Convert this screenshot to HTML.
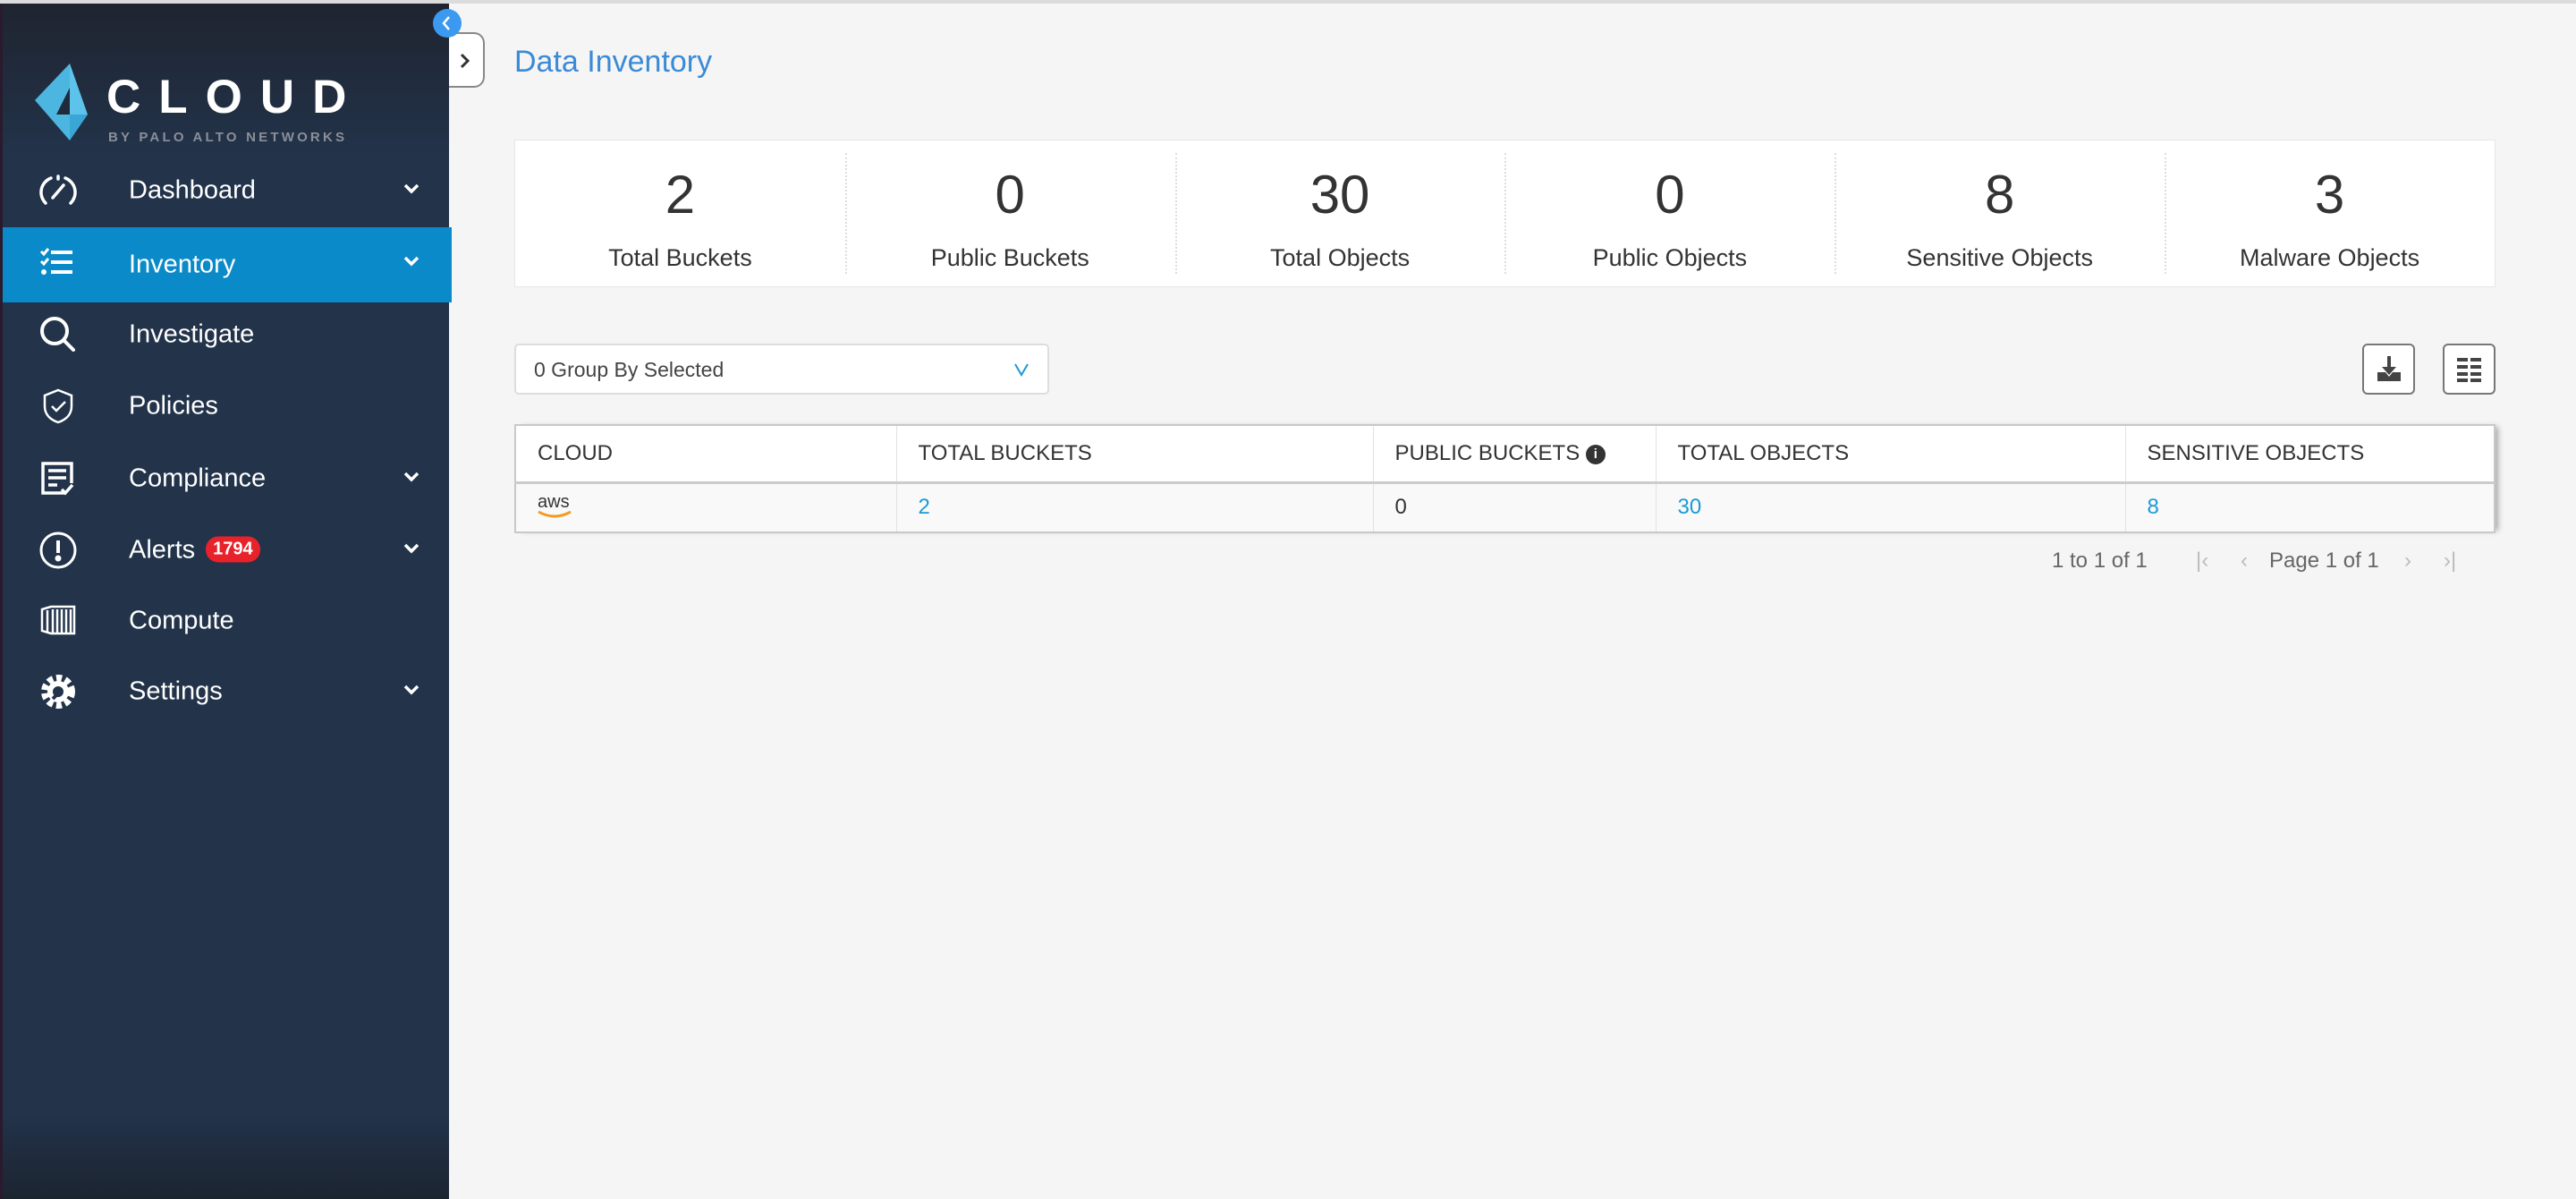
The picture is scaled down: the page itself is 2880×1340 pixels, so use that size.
<!DOCTYPE html>
<html><head><style>
*{margin:0;padding:0;box-sizing:border-box}
body{width:2880px;height:1340px;overflow:hidden;background:#f5f5f5;font-family:"Liberation Sans",sans-serif;position:relative;color:#333}
.top{position:absolute;left:0;top:0;width:2880px;height:4px;background:#dcdcdc}
.side{position:absolute;left:0;top:4px;width:502px;height:1336px;background:linear-gradient(#1f2430 0px,#22334a 170px,#22334a 1240px,#1c2430 1336px);border-left:3px solid #2a1a2e}
.item{position:absolute;left:0;width:502px;height:80px;color:#fff;font-size:29px}
.item .lbl{position:absolute;left:141px;top:50%;transform:translateY(-50%)}
.item svg.ic{position:absolute;left:40px;top:18px}
.item .chev{position:absolute;left:447px;top:28px}
.sel{background:#0a8ac8}
.badge{display:inline-block;background:#e8222b;color:#fff;font-size:20px;font-weight:bold;border-radius:14px;padding:3px 8px;margin-left:12px;vertical-align:4px}
.title{position:absolute;left:575px;top:50px;font-size:34px;color:#3a8ad6}
.stats{position:absolute;left:575px;top:156px;width:2215px;height:165px;background:#fff;border:1px solid #e6e6e6;display:flex}
.stat{flex:1;text-align:center;position:relative}
.stat+.stat:before{content:"";position:absolute;left:0;top:14px;bottom:14px;border-left:2px dotted #ddd}
.stat .n{font-size:60px;margin-top:26px;color:#333;height:72px}
.stat .l{font-size:27px;margin-top:18px;color:#333}
.dd{position:absolute;left:575px;top:384px;width:598px;height:57px;background:#fff;border:2px solid #ddd;border-radius:5px;font-size:23px;color:#444;padding:14px 20px}
.btn{position:absolute;top:384px;width:59px;height:57px;background:#fff;border:2px solid #777;border-radius:6px}
table{position:absolute;left:575px;top:474px;width:2215px;border-collapse:collapse;border:2px solid #c8c8c8;box-shadow:6px 0 6px -3px #aaa}
th{height:64px;background:#fff;text-align:left;font-size:24px;font-weight:normal;color:#333;padding-left:24px;border-right:1px solid #e2e2e2;border-bottom:3px solid #ccc}
td{height:56px;background:#f9f9f9;font-size:24px;padding-left:24px;border-right:1px solid #e2e2e2;color:#333}
td.b{color:#1a9ad6}
.pg{position:absolute;top:613px;font-size:24px;color:#666}
</style></head><body>
<div class="top"></div>
<div class="side">
 <svg style="position:absolute;left:32px;top:64px" width="64" height="90" viewBox="0 0 64 90"><polygon points="4,44 43,3 43,89" fill="#4db6e0"/><polygon points="43,3 63,60 43,60" fill="#5ec3ea"/><polygon points="43,30 43,60 28,60" fill="#1f2a3a"/><polygon points="43,60 63,60 43,89" fill="#3aa6d6"/></svg>
 <div style="position:absolute;left:116px;top:74px;color:#fff;font-size:53px;font-weight:bold;letter-spacing:20px">CLOUD</div>
 <div style="position:absolute;left:118px;top:141px;color:#8a8f98;font-size:15px;font-weight:bold;letter-spacing:3.2px">BY PALO ALTO NETWORKS</div>

 <div class="item" style="top:169px"><svg class="ic" width="44" height="44" viewBox="0 0 44 44" fill="none" stroke="#fff" stroke-width="3.5" stroke-linecap="round"><path d="M8 36A17 17 0 0 1 14 8M30 8A17 17 0 0 1 36 36M22 6v3M16 30l12-14"/></svg><span class="lbl">Dashboard</span><svg class="chev" width="20" height="20" viewBox="0 0 20 20"><path d="M3 6l7 7 7-7" stroke="#fff" stroke-width="3.5" fill="none"/></svg></div>
 <div class="item sel" style="top:250px;height:84px"><svg class="ic" width="44" height="44" viewBox="0 0 44 44" fill="#fff"><rect x="14" y="8" width="24" height="4"/><rect x="14" y="19" width="24" height="4"/><rect x="14" y="30" width="24" height="4"/><path d="M3 9l3 3 5-6" stroke="#fff" stroke-width="3" fill="none"/><path d="M3 20l3 3 5-6" stroke="#fff" stroke-width="3" fill="none"/><circle cx="6" cy="32" r="3"/></svg><span class="lbl">Inventory</span><svg class="chev" width="20" height="20" viewBox="0 0 20 20"><path d="M3 6l7 7 7-7" stroke="#fff" stroke-width="3.5" fill="none"/></svg></div>
 <div class="item" style="top:330px"><svg class="ic" width="44" height="44" viewBox="0 0 44 44" fill="none" stroke="#fff" stroke-width="4" stroke-linecap="round"><circle cx="18" cy="18" r="14"/><path d="M29 29l10 10"/></svg><span class="lbl">Investigate</span></div>
 <div class="item" style="top:410px"><svg class="ic" width="44" height="44" viewBox="0 0 44 44" fill="none" stroke="#fff" stroke-width="2.5"><path d="M22 4l15 6v12c0 9-6 15-15 18C13 37 7 31 7 22V10z"/><path d="M15 22l5 5 10-10"/></svg><span class="lbl">Policies</span></div>
 <div class="item" style="top:491px"><svg class="ic" width="44" height="44" viewBox="0 0 44 44" fill="none" stroke="#fff" stroke-width="3.5"><path d="M30 38H5V5h32v22"/><path d="M11 13h20M11 21h20M11 29h10"/><path d="M26 34l4 4 8-9"/></svg><span class="lbl">Compliance</span><svg class="chev" width="20" height="20" viewBox="0 0 20 20"><path d="M3 6l7 7 7-7" stroke="#fff" stroke-width="3.5" fill="none"/></svg></div>
 <div class="item" style="top:571px"><svg class="ic" width="44" height="44" viewBox="0 0 44 44" fill="none" stroke="#fff" stroke-width="3"><circle cx="22" cy="22" r="19"/><path d="M22 11v14" stroke-width="4"/><circle cx="22" cy="31" r="2" fill="#fff"/></svg><span class="lbl">Alerts<span class="badge">1794</span></span><svg class="chev" width="20" height="20" viewBox="0 0 20 20"><path d="M3 6l7 7 7-7" stroke="#fff" stroke-width="3.5" fill="none"/></svg></div>
 <div class="item" style="top:650px"><svg class="ic" width="44" height="44" viewBox="0 0 44 44" fill="none" stroke="#fff" stroke-width="2.5"><path d="M4 9l10-3h26v30H14l-10-3z"/><path d="M10 10v24M16 9v26M21 9v26M26 9v26M31 9v26M36 9v26"/></svg><span class="lbl">Compute</span></div>
 <div class="item" style="top:729px"><svg class="ic" width="44" height="44" viewBox="0 0 44 44"><circle cx="22" cy="22" r="15" fill="none" stroke="#fff" stroke-width="8" stroke-dasharray="6 3.8"/><circle cx="22" cy="22" r="12" fill="#fff"/><circle cx="22" cy="22" r="6" fill="#22334a"/><path d="M16 30l8-8" stroke="#22334a" stroke-width="4"/></svg><span class="lbl">Settings</span><svg class="chev" width="20" height="20" viewBox="0 0 20 20"><path d="M3 6l7 7 7-7" stroke="#fff" stroke-width="3.5" fill="none"/></svg></div>
</div>
<div style="position:absolute;left:502px;top:36px;width:40px;height:62px;background:#fff;border:2px solid #888;border-left:none;border-radius:0 12px 12px 0"><svg style="position:absolute;left:10px;top:20px" width="16" height="20" viewBox="0 0 16 20"><path d="M4 3l7 7-7 7" stroke="#333" stroke-width="3" fill="none"/></svg></div>
<div style="position:absolute;left:484px;top:10px;width:32px;height:32px;border-radius:50%;background:#3b99f0"><svg width="32" height="32" viewBox="0 0 32 32"><path d="M18 9l-6 7 6 7" stroke="#fff" stroke-width="2.5" fill="none"/></svg></div>

<div class="title">Data Inventory</div>
<div class="stats">
 <div class="stat"><div class="n">2</div><div class="l">Total Buckets</div></div>
 <div class="stat"><div class="n">0</div><div class="l">Public Buckets</div></div>
 <div class="stat"><div class="n">30</div><div class="l">Total Objects</div></div>
 <div class="stat"><div class="n">0</div><div class="l">Public Objects</div></div>
 <div class="stat"><div class="n">8</div><div class="l">Sensitive Objects</div></div>
 <div class="stat"><div class="n">3</div><div class="l">Malware Objects</div></div>
</div>
<div class="dd">0 Group By Selected<svg style="position:absolute;right:20px;top:19px" width="18" height="16" viewBox="0 0 18 16"><path d="M2 2l7 12 7-12" stroke="#1a9ad6" stroke-width="2" fill="none"/></svg></div>
<div class="btn" style="left:2641px"><svg style="position:absolute;left:13px;top:12px" width="30" height="30" viewBox="0 0 30 30" fill="#444"><rect x="13" y="0" width="4" height="16"/><polygon points="7,12 23,12 15,21"/><path d="M2 18h9l4 5 4-5h9v10H2z"/></svg></div>
<div class="btn" style="left:2731px"><svg style="position:absolute;left:14px;top:13px" width="28" height="28" viewBox="0 0 28 28" fill="#444"><rect x="0" y="1" width="12" height="4"/><rect x="15" y="1" width="12" height="4"/><rect x="0" y="9" width="12" height="4"/><rect x="15" y="9" width="12" height="4"/><rect x="0" y="17" width="12" height="4"/><rect x="15" y="17" width="12" height="4"/><rect x="0" y="24" width="12" height="4"/><rect x="15" y="24" width="12" height="4"/></svg></div>

<table>
<tr><th style="width:426px">CLOUD</th><th style="width:533px">TOTAL BUCKETS</th><th style="width:316px">PUBLIC BUCKETS <span style="display:inline-block;width:22px;height:22px;border-radius:50%;background:#333;color:#fff;font-size:15px;text-align:center;line-height:22px;font-weight:bold;vertical-align:2px">i</span></th><th style="width:525px">TOTAL OBJECTS</th><th>SENSITIVE OBJECTS</th></tr>
<tr><td><div style="font-size:20px;line-height:18px;color:#333;position:relative;top:-6px">aws<svg style="position:absolute;left:0;top:18px" width="40" height="10" viewBox="0 0 40 10"><path d="M1 2q18 10 36 0" stroke="#f39a1e" stroke-width="3" fill="none"/></svg></div></td><td class="b">2</td><td>0</td><td class="b">30</td><td class="b">8</td></tr>
</table>
<div class="pg" style="left:2294px">1 to 1 of 1</div>
<div class="pg" style="left:2455px;color:#bbb">|‹</div>
<div class="pg" style="left:2505px;color:#bbb">‹</div>
<div class="pg" style="left:2537px">Page 1 of 1</div>
<div class="pg" style="left:2688px;color:#bbb">›</div>
<div class="pg" style="left:2732px;color:#bbb">›|</div>
</body></html>
